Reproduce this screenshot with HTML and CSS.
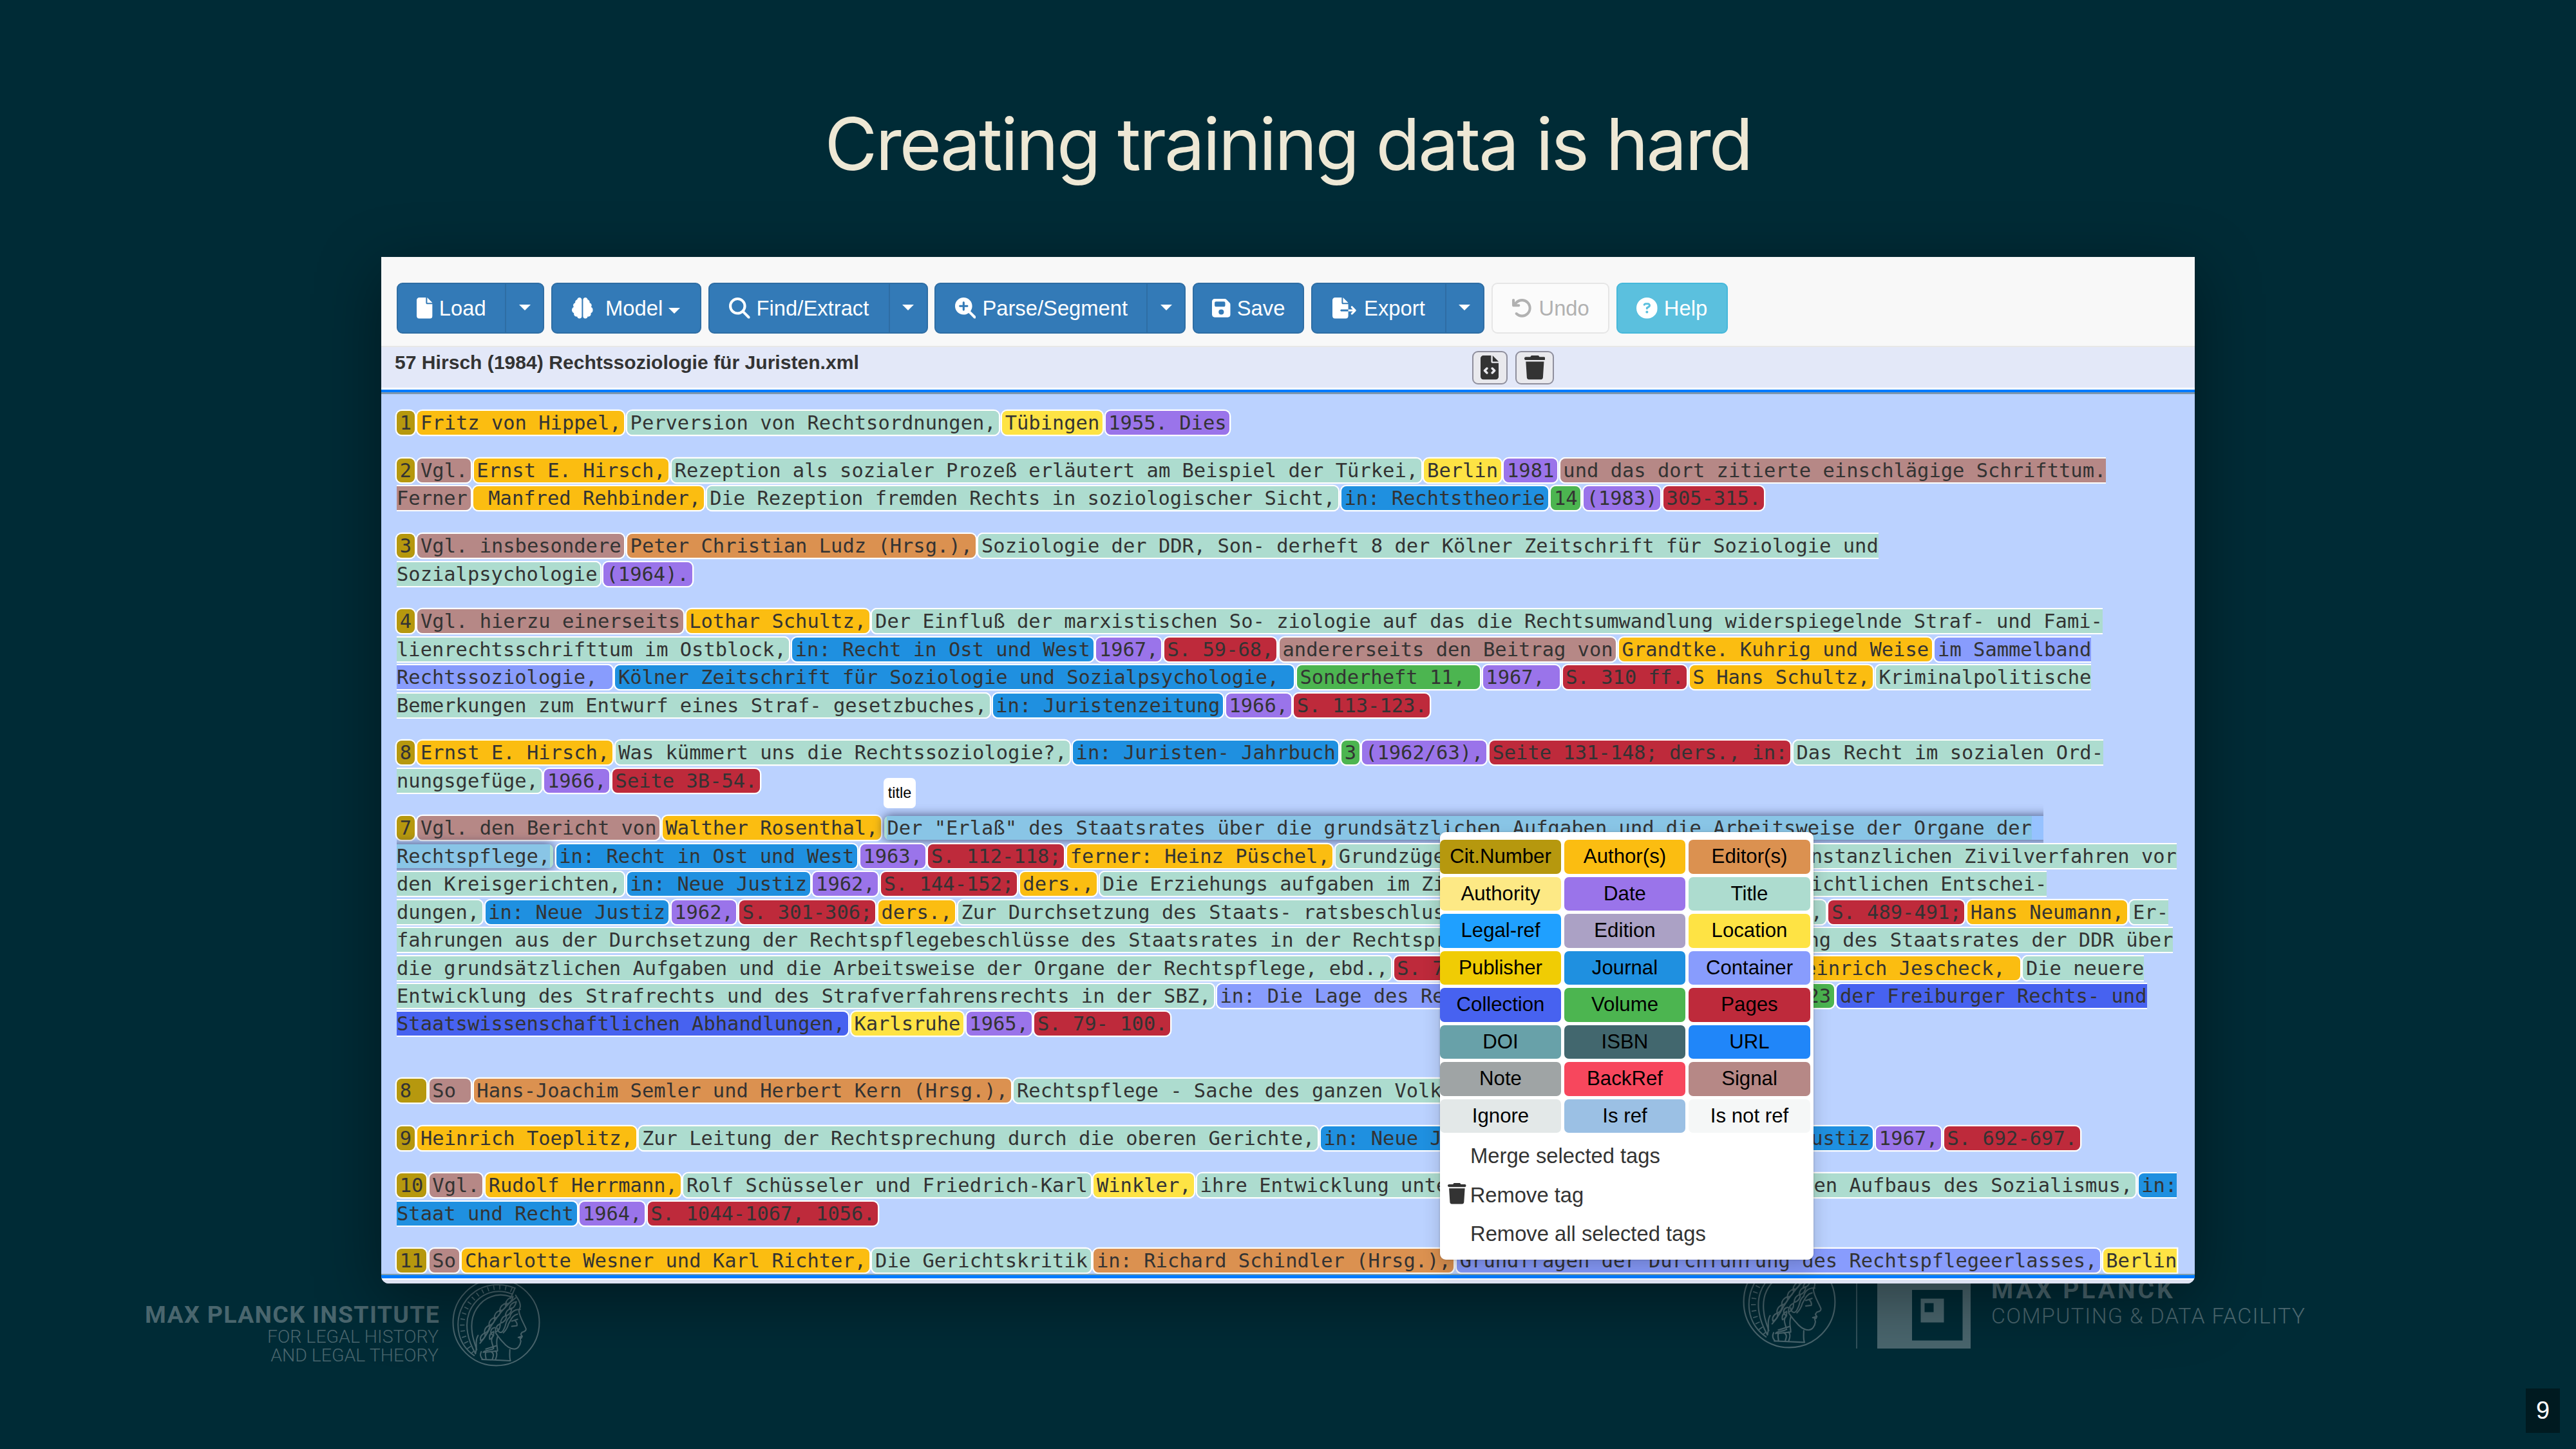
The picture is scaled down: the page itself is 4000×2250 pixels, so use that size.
FILE: index.html
```html
<!DOCTYPE html>
<html lang="de">
<head>
<meta charset="utf-8">
<title>Creating training data is hard</title>
<link rel="stylesheet" href="styles.css">
</head>
<body>
<svg class="defs" aria-hidden="true">
  <symbol id="file" viewBox="0 0 384 512"><path d="M0 64C0 28.7 28.7 0 64 0H224V128c0 17.7 14.3 32 32 32H384V448c0 35.3-28.7 64-64 64H64c-35.3 0-64-28.7-64-64V64zm384 64H256V0L384 128z"/></symbol>
  <symbol id="brain" viewBox="0 0 512 512"><path d="M184 0c30.9 0 56 25.1 56 56V456c0 30.9-25.1 56-56 56c-28.9 0-52.7-21.9-55.7-50.1c-5.2 1.4-10.7 2.1-16.3 2.1c-35.3 0-64-28.7-64-64c0-7.4 1.3-14.6 3.6-21.2C21.4 367.4 0 338.2 0 304c0-31.9 18.7-59.5 45.8-72.3C37.1 220.8 32 207 32 192c0-30.7 21.6-56.3 50.4-62.6C80.8 123.9 80 118 80 112c0-29.9 20.6-55.1 48.3-62.1C131.3 21.9 155.1 0 184 0zM328 0c28.9 0 52.6 21.9 55.7 49.9c27.8 7 48.3 32.1 48.3 62.1c0 6-.8 11.9-2.4 17.4c28.8 6.2 50.4 31.9 50.4 62.6c0 15-5.1 28.8-13.8 39.7C493.3 244.5 512 272.1 512 304c0 34.2-21.4 63.4-51.6 74.8c2.3 6.6 3.6 13.8 3.6 21.2c0 35.3-28.7 64-64 64c-5.6 0-11.1-.7-16.3-2.1c-3 28.2-26.8 50.1-55.7 50.1c-30.9 0-56-25.1-56-56V56c0-30.9 25.1-56 56-56z"/></symbol>
  <symbol id="search" viewBox="0 0 512 512"><path d="M416 208c0 45.9-14.9 88.3-40 122.7L502.6 457.4c12.5 12.5 12.5 32.8 0 45.3s-32.8 12.5-45.3 0L330.7 376c-34.4 25.2-76.8 40-122.7 40C93.1 416 0 322.9 0 208S93.1 0 208 0S416 93.1 416 208zM208 352a144 144 0 1 0 0-288 144 144 0 1 0 0 288z"/></symbol>
  <symbol id="search-plus" viewBox="0 0 512 512"><path d="M416 208c0 45.9-14.9 88.3-40 122.7L502.6 457.4c12.5 12.5 12.5 32.8 0 45.3s-32.8 12.5-45.3 0L330.7 376c-34.4 25.2-76.8 40-122.7 40C93.1 416 0 322.9 0 208S93.1 0 208 0S416 93.1 416 208zM184 296c0 13.3 10.7 24 24 24s24-10.7 24-24V232h64c13.3 0 24-10.7 24-24s-10.7-24-24-24H232V120c0-13.3-10.7-24-24-24s-24 10.7-24 24v64H120c-13.3 0-24 10.7-24 24s10.7 24 24 24h64v64z"/></symbol>
  <symbol id="save" viewBox="0 0 448 512"><path d="M64 32C28.7 32 0 60.7 0 96V416c0 35.3 28.7 64 64 64H384c35.3 0 64-28.7 64-64V173.3c0-17-6.7-33.3-18.7-45.3L352 50.7C340 38.7 323.7 32 306.7 32H64zm0 96c0-17.7 14.3-32 32-32H288c17.7 0 32 14.3 32 32v64c0 17.7-14.3 32-32 32H96c-17.7 0-32-14.3-32-32V128zM224 288a64 64 0 1 1 0 128 64 64 0 1 1 0-128z"/></symbol>
  <symbol id="export" viewBox="0 0 576 512"><path d="M0 64C0 28.7 28.7 0 64 0H224V128c0 17.7 14.3 32 32 32H384V288H216c-13.3 0-24 10.7-24 24s10.7 24 24 24H384V448c0 35.3-28.7 64-64 64H64c-35.3 0-64-28.7-64-64V64zM384 336V288H494.1l-39-39c-9.4-9.4-9.4-24.6 0-33.9s24.6-9.4 33.9 0l80 80c9.4 9.4 9.4 24.6 0 33.9l-80 80c-9.4 9.4-24.6 9.4-33.9 0s-9.4-24.6 0-33.9l39-39H384zm0-208H256V0L384 128z"/></symbol>
  <symbol id="undo" viewBox="0 0 512 512"><path d="M125.7 160H176c17.7 0 32 14.3 32 32s-14.3 32-32 32H48c-17.7 0-32-14.3-32-32V64c0-17.7 14.3-32 32-32s32 14.3 32 32v51.2L97.6 97.6c87.5-87.5 229.3-87.5 316.8 0s87.5 229.3 0 316.8s-229.3 87.5-316.8 0c-12.5-12.5-12.5-32.8 0-45.3s32.8-12.5 45.3 0c62.5 62.5 163.8 62.5 226.3 0s62.5-163.8 0-226.3s-163.8-62.5-226.3 0L125.7 160z"/></symbol>
  <symbol id="help" viewBox="0 0 512 512"><path d="M256 512A256 256 0 1 0 256 0a256 256 0 1 0 0 512zM169.8 165.3c7.9-22.3 29.1-37.3 52.8-37.3h58.3c34.9 0 63.1 28.3 63.1 63.1c0 22.6-12.1 43.5-31.7 54.8L280 264.4c-.2 13-10.9 23.6-24 23.6c-13.3 0-24-10.7-24-24V250.5c0-8.6 4.6-16.5 12.1-20.8l44.3-25.4c4.7-2.7 7.6-7.7 7.6-13.1c0-8.4-6.8-15.1-15.1-15.1H222.6c-3.4 0-6.4 2.1-7.5 5.3l-.4 1.2c-4.4 12.5-18.2 19-30.6 14.6s-19-18.2-14.6-30.6l.4-1.2zM224 352a32 32 0 1 1 64 0 32 32 0 1 1-64 0z"/></symbol>
  <symbol id="code" viewBox="0 0 384 512"><path d="M64 0C28.7 0 0 28.7 0 64V448c0 35.3 28.7 64 64 64H320c35.3 0 64-28.7 64-64V160H256c-17.7 0-32-14.3-32-32V0H64zM256 0V128H384L256 0zM153 289l-31 31 31 31c9.4 9.4 9.4 24.6 0 33.9s-24.6 9.4-33.9 0L71 337c-9.4-9.4-9.4-24.6 0-33.9l48-48c9.4-9.4 24.6-9.4 33.9 0s9.4 24.6 0 33.9zM265 255l48 48c9.4 9.4 9.4 24.6 0 33.9l-48 48c-9.4 9.4-24.6 9.4-33.9 0s-9.4-24.6 0-33.9l31-31-31-31c-9.4-9.4-9.4-24.6 0-33.9s24.6-9.4 33.9 0z"/></symbol>
  <symbol id="trash" viewBox="0 0 448 512"><path d="M135.2 17.7L128 32H32C14.3 32 0 46.3 0 64S14.3 96 32 96H416c17.7 0 32-14.3 32-32s-14.3-32-32-32H320l-7.2-14.3C307.4 6.8 296.3 0 284.2 0H163.8c-12.1 0-23.2 6.8-28.6 17.7zM416 128H32L53.2 467c1.6 25.3 22.6 45 47.9 45H346.9c25.3 0 46.3-19.7 47.9-45L416 128z"/></symbol>
  <symbol id="minerva" viewBox="0 0 136 136">
    <g fill="none" stroke="currentColor" stroke-width="2" stroke-linecap="round" stroke-linejoin="round">
      <circle cx="68" cy="68" r="66.5"/>
      <path d="M97 15C78 7 54 8 36 20C14 35 5 62 11 87C15 102 24 112 34 119"/>
      <path d="M92 24C74 17 56 20 43 30C27 43 20 62 24 84C26 97 31 107 36 116"/>
      <path d="M90 28C75 23 60 26 48 35C34 47 28 64 31 84C32 94 36 103 38 110"/>
      <path d="M97 15l-7 16"/>
      <path stroke-width="7" stroke-linecap="butt" stroke-dasharray="1.6 7.5" d="M92 18C76 11 57 13 41 24C22 38 12 60 17 84C20 99 27 109 34 116"/>
      <path d="M98 26C101 32 106 36 105 44L103 50C104 60 111 70 114 78C114 82 111 82 108 83L106 86L108 90L105 93L106 97C105 104 101 109 96 109C88 109 82 103 78 98C73 93 70 88 67 84"/>
      <path d="M89 110C89 116 88 122 90 127L46 125"/>
      <path d="M98 30C82 42 70 58 60 74C55 84 50 92 43 100"/>
      <path d="M94 28q-11 3-12 13q10-3 12-13M84 38q-10 3-11 13q10-3 11-13M75 49q-10 3-10 13q9-3 10-13M66 60q-10 4-9 13q9-3 9-13M58 72q-9 4-8 13q8-4 8-13M51 84q-9 4-7 12q8-3 7-12"/>
      <path d="M99 36q-2 10-11 12q1-10 11-12M92 46q-1 10-10 12q1-10 10-12M84 57q0 9-9 12q0-9 9-12M74 70q1 9-7 13q-1-9 7-13M64 82q1 9-6 12q-2-8 6-12"/>
      <path d="M105 48C96 47 90 53 89 60C82 64 84 72 80 78C76 88 70 82 70 77M101 55C92 57 90 66 87 70C85 78 81 82 79 84"/>
      <path d="M92 66l9-3M92 74l8-1c1-4-1-6-3-8M108 89l-6 2l5 1"/>
      <path d="M66 76c-8 1-8 10-2 12c-6 6-2 12 0 20c-6 4-14 2-16 6M70 90c-3 10 0 14 0 22l-20 2M68 104l-16 5M36 116c4-14-2-18 4-28"/>
      <path d="M45 113c-3 6 0 9 2 12M52 114c-2 5 1 8 0 11M60 113c6 3 3 8 2 12M67 112c4 4 1 10 0 13"/>
    </g>
  </symbol>
</svg>

<main class="slide">
  <div class="logo logo-left">
    <div class="institute"><b>MAX PLANCK INSTITUTE</b><span>FOR LEGAL HISTORY</span><span>AND LEGAL THEORY</span></div>
    <svg class="medal"><use href="#minerva"/></svg>
  </div>
  <div class="logo logo-right">
    <svg class="medal medal-big"><use href="#minerva"/></svg>
    <i class="rule"></i>
    <svg class="mark" viewBox="0 0 145 145"><path fill="currentColor" fill-rule="evenodd" d="M0 0H145V145H0ZM54 54H132.500V132.500H54ZM67.500 67.500H103.500V104.500H67.500ZM73.500 74.500H87.500V88.500H73.500Z"/></svg>
    <div class="facility"><b>MAX PLANCK</b><span>COMPUTING &amp; DATA FACILITY</span></div>
  </div>

  <h1>Creating training data is hard</h1>

  <section class="app">
    <nav class="toolbar">
      <div class="group w-load"><button class="btn"><svg class="i i-file"><use href="#file"/></svg>Load</button><button class="btn drop"><i class="caret"></i></button></div>
      <button class="btn w-model"><svg class="i wide-gap"><use href="#brain"/></svg>Model<i class="caret inline"></i></button>
      <div class="group w-find"><button class="btn"><svg class="i"><use href="#search"/></svg>Find/Extract</button><button class="btn drop"><i class="caret"></i></button></div>
      <div class="group w-parse"><button class="btn"><svg class="i"><use href="#search-plus"/></svg>Parse/Segment</button><button class="btn drop"><i class="caret"></i></button></div>
      <button class="btn w-save"><svg class="i i-save"><use href="#save"/></svg>Save</button>
      <div class="group w-export"><button class="btn"><svg class="i i-export"><use href="#export"/></svg>Export</button><button class="btn drop"><i class="caret"></i></button></div>
      <button class="btn plain w-undo"><svg class="i"><use href="#undo"/></svg>Undo</button>
      <button class="btn info w-help"><svg class="i"><use href="#help"/></svg>Help</button>
    </nav>

    <header class="filebar">
      <strong>57 Hirsch (1984) Rechtssoziologie für Juristen.xml</strong>
      <div class="tools"><button><svg class="t-code"><use href="#code"/></svg></button><button class="wide"><svg class="t-trash"><use href="#trash"/></svg></button></div>
    </header>

    <article class="doc">
<p><span class="t cit">1</span><span class="t author">Fritz von Hippel,</span><span class="t title">Perversion von Rechtsordnungen,</span><span class="t location">Tübingen</span><span class="t date">1955. Dies</span></p>
<p><span class="t cit">2</span><span class="t signal">Vgl.</span><span class="t author">Ernst E. Hirsch,</span><span class="t title">Rezeption als sozialer Prozeß erläutert am Beispiel der Türkei,</span><span class="t location">Berlin</span><span class="t date">1981</span><span class="t signal">und das dort zitierte einschlägige Schrifttum.<br>Ferner</span><span class="t author"> Manfred Rehbinder,</span><span class="t title">Die Rezeption fremden Rechts in soziologischer Sicht,</span><span class="t journal">in: Rechtstheorie</span><span class="t volume">14</span><span class="t date">(1983)</span><span class="t pages">305-315.</span></p>
<p><span class="t cit">3</span><span class="t signal">Vgl. insbesondere</span><span class="t editor">Peter Christian Ludz (Hrsg.),</span><span class="t title">Soziologie der DDR, Son- derheft 8 der Kölner Zeitschrift für Soziologie und<br>Sozialpsychologie</span><span class="t date">(1964).</span></p>
<p><span class="t cit">4</span><span class="t signal">Vgl. hierzu einerseits</span><span class="t author">Lothar Schultz,</span><span class="t title">Der Einfluß der marxistischen So- ziologie auf das die Rechtsumwandlung widerspiegelnde Straf- und Fami-<br>lienrechtsschrifttum im Ostblock,</span><span class="t journal">in: Recht in Ost und West</span><span class="t date">1967,</span><span class="t pages">S. 59-68,</span><span class="t signal">andererseits den Beitrag von</span><span class="t author">Grandtke. Kuhrig und Weise</span><span class="t container">im Sammelband<br>Rechtssoziologie, </span><span class="t journal">Kölner Zeitschrift für Soziologie und Sozialpsychologie, </span><span class="t volume">Sonderheft 11, </span><span class="t date">1967, </span><span class="t pages">S. 310 ff.</span><span class="t author">S Hans Schultz,</span><span class="t title">Kriminalpolitische<br>Bemerkungen zum Entwurf eines Straf- gesetzbuches,</span><span class="t journal">in: Juristenzeitung</span><span class="t date">1966,</span><span class="t pages">S. 113-123.</span></p>
<p><span class="t cit">8</span><span class="t author">Ernst E. Hirsch,</span><span class="t title">Was kümmert uns die Rechtssoziologie?,</span><span class="t journal">in: Juristen- Jahrbuch</span><span class="t volume">3</span><span class="t date">(1962/63),</span><span class="t pages">Seite 131-148; ders., in:</span><span class="t title">Das Recht im sozialen Ord-<br>nungsgefüge,</span><span class="t date">1966,</span><span class="t pages">Seite 3B-54.</span></p>
<p class="spaced"><span class="t cit">7</span><span class="t signal">Vgl. den Bericht von</span><span class="t author">Walther Rosenthal,</span><span class="t title active"><span class="sel">Der "Erlaß" des Staatsrates über die grundsätzlichen Aufgaben und die Arbeitsweise der Organe der</span><span class="sel tail"> </span><br><span class="sel">Rechtspflege,</span></span><span class="t journal">in: Recht in Ost und West</span><span class="t date">1963,</span><span class="t pages">S. 112-118;</span><span class="t author">ferner: Heinz Püschel,</span><span class="t title">Grundzüge der neuen Verhandlung im erstinstanzlichen Zivilverfahren vor<br>den Kreisgerichten,</span><span class="t journal">in: Neue Justiz</span><span class="t date">1962,</span><span class="t pages">S. 144-152;</span><span class="t author">ders.,</span><span class="t title">Die Erziehungs aufgaben im Zivilverfahren und die neuere gerichtlichen Entschei-<br>dungen,</span><span class="t journal">in: Neue Justiz</span><span class="t date">1962,</span><span class="t pages">S. 301-306;</span><span class="t author">ders.,</span><span class="t title">Zur Durchsetzung des Staats- ratsbeschlusses in der Rechtsprechung heute,</span><span class="t pages">S. 489-491;</span><span class="t author">Hans Neumann,</span><span class="t title">Er-<br>fahrungen aus der Durchsetzung der Rechtspflegebeschlüsse des Staatsrates in der Rechtsprechung,</span><span class="t pages">S. 112-118;</span><span class="t title">die Anordnung des Staatsrates der DDR über<br>die grundsätzlichen Aufgaben und die Arbeitsweise der Organe der Rechtspflege, ebd.,</span><span class="t pages">S. 716-721;</span><span class="t signal">vgl. auch weiter</span><span class="t author">Hans-Heinrich Jescheck, </span><span class="t title">Die neuere<br>Entwicklung des Strafrechts und des Strafverfahrensrechts in der SBZ,</span><span class="t container">in: Die Lage des Rechts in der deutschen SBZ,</span><span class="t volume">Bd. 23</span><span class="t collection">der Freiburger Rechts- und<br>Staatswissenschaftlichen Abhandlungen,</span><span class="t location">Karlsruhe</span><span class="t date">1965,</span><span class="t pages">S. 79- 100.</span></p>
<p><span class="t cit">8 </span><span class="t signal">So </span><span class="t editor">Hans-Joachim Semler und Herbert Kern (Hrsg.),</span><span class="t title">Rechtspflege - Sache des ganzen Volkes,</span></p>
<p><span class="t cit">9</span><span class="t author">Heinrich Toeplitz,</span><span class="t title">Zur Leitung der Rechtsprechung durch die oberen Gerichte,</span><span class="t journal">in: Neue Justiz</span><span class="t date">1966,</span><span class="t pages">S. 45-61;</span><span class="t journal">in: Neue Justiz</span><span class="t date">1967,</span><span class="t pages">S. 692-697.</span></p>
<p><span class="t cit">10</span><span class="t signal">Vgl.</span><span class="t author">Rudolf Herrmann,</span><span class="t title">Rolf Schüsseler und Friedrich-Karl</span><span class="t location">Winkler,</span><span class="t title">ihre Entwicklung unter den Bedingungen des umfassenden Aufbaus des Sozialismus,</span><span class="t journal">in:<br>Staat und Recht</span><span class="t date">1964,</span><span class="t pages">S. 1044-1067, 1056.</span></p>
<p><span class="t cit">11</span><span class="t signal">So</span><span class="t author">Charlotte Wesner und Karl Richter,</span><span class="t title">Die Gerichtskritik</span><span class="t editor">in: Richard Schindler (Hrsg.),</span><span class="t container">Grundfragen der Durchführung des Rechtspflegeerlasses,</span><span class="t location open">Berlin</span></p>
    </article>
    <footer class="appfoot"></footer>

    <div class="tip">title</div>

    <div class="menu">
      <div class="grid">
        <span class="cit">Cit.Number</span><span class="author">Author(s)</span><span class="editor">Editor(s)</span>
        <span class="authority">Authority</span><span class="date">Date</span><span class="title">Title</span>
        <span class="legal">Legal-ref</span><span class="edition">Edition</span><span class="location">Location</span>
        <span class="publisher">Publisher</span><span class="journal">Journal</span><span class="container">Container</span>
        <span class="collection">Collection</span><span class="volume">Volume</span><span class="pages">Pages</span>
        <span class="doi">DOI</span><span class="isbn">ISBN</span><span class="url">URL</span>
        <span class="note">Note</span><span class="backref">BackRef</span><span class="signal">Signal</span>
        <span class="ignore">Ignore</span><span class="isref">Is ref</span><span class="notref">Is not ref</span>
      </div>
      <ul>
        <li>Merge selected tags</li>
        <li><svg><use href="#trash"/></svg>Remove tag</li>
        <li>Remove all selected tags</li>
      </ul>
    </div>
  </section>

  <div class="page-no">9</div>
</main>
</body>
</html>
```

FILE: styles.css
```css
* { box-sizing: border-box; }
body { margin: 0; background: #002b36; }
.defs { position: absolute; width: 0; height: 0; }
svg { fill: currentColor; flex: none; display: block; }

.slide {
  position: relative;
  width: 4000px;
  height: 2250px;
  overflow: hidden;
  display: flex;
  flex-direction: column;
  align-items: center;
  background: #002b36;
  font-family: "Liberation Sans", Arial, sans-serif;
}
h1 {
  margin: 0;
  height: 399px;
  padding-top: 155px;
  font: 400 112px/136px Inter, sans-serif;
  letter-spacing: -3px;
  color: #eee8d5;
  white-space: nowrap;
}

/* footer logos */
.logo { position: absolute; display: flex; color: #4a666e; font-family: Roboto, sans-serif; white-space: nowrap; }
.logo b, .logo span { display: block; }
.logo-left { left: 225px; top: 1985px; }
.institute { width: 456px; padding-top: 36px; text-align: right; }
.institute b { font-size: 37.500px; line-height: 41px; letter-spacing: 1.300px; }
.institute span { font-size: 28.500px; line-height: 28.500px; font-weight: 300; }
.medal { width: 137px; height: 137px; margin-left: 21px; }
.logo-right { left: 2706px; top: 1949px; }
.medal-big { width: 145px; height: 145px; margin-left: 0; }
.rule { width: 2px; height: 145px; margin: 0 31px; background: #33525b; }
.mark { width: 145px; height: 145px; }
.facility { padding: 34px 0 0 32px; }
.facility b { font-size: 39px; line-height: 40px; letter-spacing: 4px; }
.facility span { font-size: 33.700px; line-height: 42px; letter-spacing: 1.400px; font-weight: 300; }

/* application window */
.app {
  position: relative;
  width: 2816px;
  height: 1594px;
  display: flex;
  flex-direction: column;
  color: #333;
  background: #e3e8f8;
  border-radius: 0 0 12px 12px;
  box-shadow: 0 24px 100px rgba(0, 0, 0, .4);
}
.toolbar {
  height: 140px;
  flex: none;
  display: flex;
  gap: 10.800px;
  padding: 40px 24px 0;
  background: #f8f8f8;
  border-bottom: 2px solid #e7e7e7;
}
.group { display: flex; }
.group .btn:first-child { flex: 1; border-radius: 9px 0 0 9px; }
.btn {
  height: 79px;
  padding: 0;
  display: flex;
  align-items: center;
  justify-content: center;
  font: 32.760px/47px "Liberation Sans", Arial, sans-serif;
  color: #fff;
  background: #337ab7;
  border: 2.340px solid #2e6da4;
  border-radius: 9px;
  white-space: nowrap;
}
.btn.drop { width: 61px; margin-left: -2px; border-radius: 0 9px 9px 0; }
.plain { background: #fbfbfb; border-color: #e6e6e6; color: #b1b1b1; }
.info { background: #5bc0de; border-color: #46b8da; }
.w-load { width: 229px; }
.w-model { width: 233px; }
.w-find { width: 341px; }
.w-parse { width: 390px; }
.w-save { width: 173px; }
.w-export { width: 269px; }
.w-undo { width: 183px; }
.w-help { width: 173px; }
.i { width: 32.760px; height: 32.760px; margin-right: 10px; }
.i-file { width: 24.600px; }
.i-save { width: 28.700px; }
.i-export { width: 36.900px; margin-right: 12px; }
.wide-gap { margin-right: 19px; }
.caret { border: 9.400px solid transparent; border-top-color: currentColor; border-bottom: 0; }
.caret.inline { margin: 7px 0 0 9px; }
.drop .caret { margin-top: -2px; }

.filebar {
  height: 73px;
  flex: none;
  display: flex;
  align-items: flex-start;
  padding: 6px 0 0 21px;
  background: linear-gradient(#e3e8f8 63px, #fff 63px 66px, #007bff 66px 70px, #7f97ad 70px);
}
.filebar strong { width: 1673px; font-size: 30.100px; line-height: 36px; white-space: nowrap; }
.tools { display: flex; gap: 12px; }
.tools button {
  width: 55px; height: 52px; padding: 0;
  display: flex; align-items: center; justify-content: center;
  color: #333; background: #e9e9ed;
  border: 2.340px solid #8f8f9d; border-radius: 9px;
}
.tools .wide { width: 60px; }
.t-code { width: 28.100px; height: 37.500px; }
.t-trash { width: 32.800px; height: 37.500px; }

/* annotated text */
.doc {
  height: 1366px;
  flex: none;
  overflow: hidden;
  padding: 23.400px 0 0 24px;
  background: #bbd2ff;
  font: 30.440px/43.450px "DejaVu Sans Mono", monospace;
}
.doc p { margin: 0 0 30.200px; white-space: pre; }
.doc p.spaced { margin-bottom: 60px; }
.t {
  padding: 1px 4.680px;
  margin-right: 4.680px;
  border-radius: 8px;
  box-shadow: 0 0 0 2.340px #fff;
}
.open { padding-right: 0; border-radius: 8px 0 0 8px; }
.active { box-shadow: 0 0 16px rgba(20, 30, 70, .75); }
.sel { padding: 1px 0; background: #89c5e6; }
.sel.tail { background: #96c2ff; }
.appfoot { height: 15px; border-radius: 0 0 12px 12px; background: linear-gradient(#7f9fae 2px, #007bff 2px 7px, #fff 7px 9px, #dfe3f3 9px); }

.cit { background: #b6980e; }
.author { background: #fbbd11; }
.editor { background: #db9150; }
.authority { background: #fde985; }
.date { background: #9a74ea; }
.title { background: #addccf; }
.legal { background: #1fa0ff; }
.edition { background: #aba1c5; }
.location { background: #fee344; }
.publisher { background: #f0cc04; }
.journal { background: #1f90e0; }
.container { background: #889cfd; }
.collection { background: #4762f0; }
.volume { background: #4cb550; }
.pages { background: #be2a3b; }
.doi { background: #68a1a9; }
.isbn { background: #42676e; }
.url { background: #2086f9; }
.note { background: #9fa4a5; }
.backref { background: #f7475d; }
.signal { background: #b68886; }
.ignore { background: #e3e8e8; }
.isref { background: #9bc0e4; }
.notref { background: #f5f7f7; }

/* overlays */
.tip {
  position: absolute; left: 780px; top: 809px;
  width: 50px; height: 47px;
  font-size: 23.400px; line-height: 47px; text-align: center;
  color: #000; background: #fff; border-radius: 7px;
}
.menu {
  position: absolute; left: 1644px; top: 893px;
  width: 580px; height: 664px;
  padding-top: 12px;
  background: #fff;
  border-radius: 9px;
  box-shadow: 0 14px 28px rgba(0, 0, 0, .18), 0 0 3px rgba(0, 0, 0, .25);
}
.grid { display: grid; grid-template-columns: 188px 188px 189px; gap: 5px; grid-auto-rows: 52.500px; }
.grid span { border-radius: 7px; color: #000; font-size: 31.200px; line-height: 51px; text-align: center; }
.menu ul { margin: 6px 0 0; padding: 0; list-style: none; }
.menu li { height: 60.600px; padding-left: 47px; display: flex; align-items: center; font-size: 32.760px; white-space: nowrap; }
.menu li svg { width: 28.700px; height: 32.760px; margin: -5px 6px 0 -35px; }

.page-no {
  position: absolute; left: 3922px; top: 2156px;
  width: 53px; height: 69px;
  font-size: 38px; line-height: 69px; text-align: center;
  color: #fff; background: #001a20;
}
```
